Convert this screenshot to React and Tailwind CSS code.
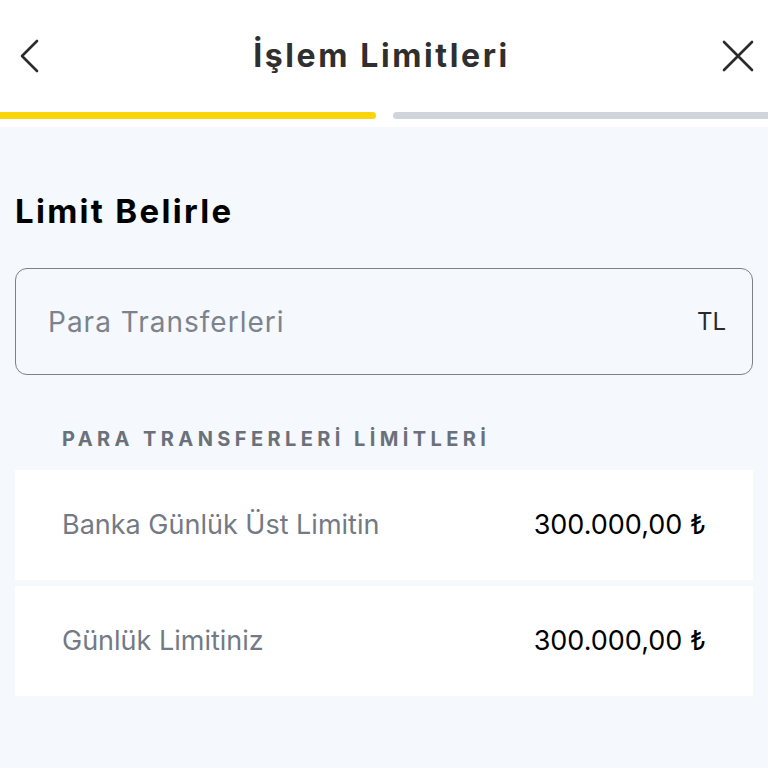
import React from 'react';

const rows = [
  { label: 'Banka Günlük Üst Limitin', value: '300.000,00 ₺' },
  { label: 'Günlük Limitiniz', value: '300.000,00 ₺' },
];

export default function App() {
  return (
    <div className="w-[768px] h-[768px] bg-[#f5f8fc] font-['Inter',sans-serif] overflow-hidden">
      {/* Header */}
      <div className="bg-white">
        <div className="h-[112px] flex items-center justify-between pl-[19px] pr-[14px]">
          <svg width="22" height="36" viewBox="0 0 22 36" fill="none" stroke="#2b2b2b" strokeWidth="2.6" strokeLinecap="round" strokeLinejoin="round">
            <path d="M18 3 L3 18 L18 33" />
          </svg>
          <h1 className="text-[32px] font-bold text-[#2f2f2f] tracking-[2.6px]">İşlem Limitleri</h1>
          <svg width="32" height="32" viewBox="0 0 32 32" fill="none" stroke="#2b2b2b" strokeWidth="2.6" strokeLinecap="round">
            <path d="M2 2 L30 30 M30 2 L2 30" />
          </svg>
        </div>
        <div className="flex gap-[17px] pb-[8px]">
          <div className="h-[7px] w-[376px] bg-[#fbd50a] rounded-r-full" />
          <div className="h-[7px] flex-1 bg-[#d0d5db] rounded-l-full" />
        </div>
      </div>

      {/* Content */}
      <div className="px-[15px]">
        <h2 className="mt-[68px] text-[33px] font-bold text-black tracking-[2.3px] leading-none">
          Limit Belirle
        </h2>

        <div className="mt-[40px] h-[107px] border-[1.5px] border-[#7b8189] rounded-[12px] flex items-center justify-between pl-[32px] pr-[26px]">
          <span className="text-[28px] text-[#7c838c] tracking-[1px]">Para Transferleri</span>
          <span className="text-[24px] text-[#2a2a2a]">TL</span>
        </div>

        <div className="mt-[54px] pl-[47px] text-[20px] font-bold tracking-[4.4px] text-[#6b717a] leading-none">
          PARA TRANSFERLERİ LİMİTLERİ
        </div>

        <div className="mt-[21px] flex flex-col gap-[6px]">
          {rows.map((r) => (
            <div key={r.label} className="bg-white h-[110px] flex items-center justify-between pl-[47px] pr-[47px]">
              <span className="text-[27px] text-[#737a84]">{r.label}</span>
              <span className="text-[27px] text-black">{r.value}</span>
            </div>
          ))}
        </div>
      </div>
    </div>
  );
}
